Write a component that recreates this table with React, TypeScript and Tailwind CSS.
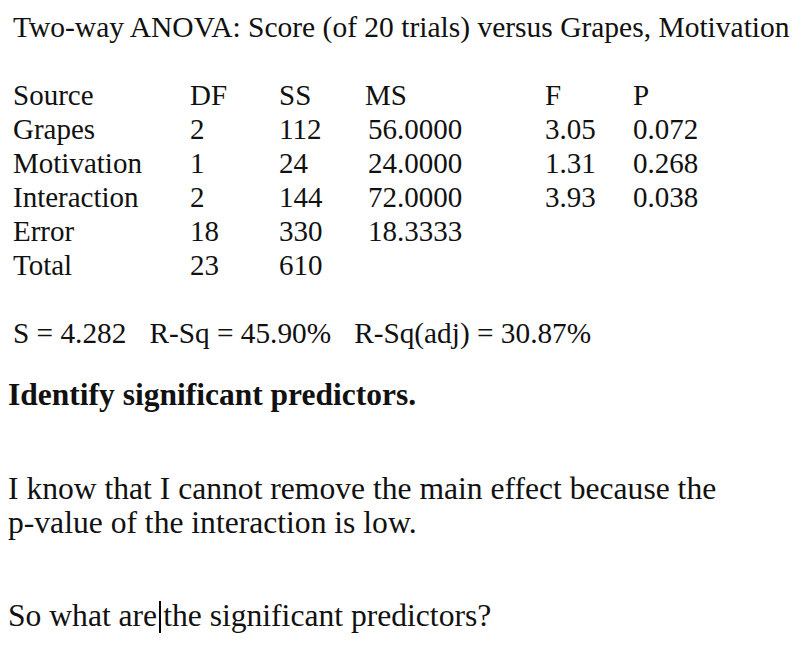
import React from "react";

const rows = [
  ["Source", "DF", "SS", "MS", "F", "P"],
  ["Grapes", "2", "112", "56.0000", "3.05", "0.072"],
  ["Motivation", "1", "24", "24.0000", "1.31", "0.268"],
  ["Interaction", "2", "144", "72.0000", "3.93", "0.038"],
  ["Error", "18", "330", "18.3333", "", ""],
  ["Total", "23", "610", "", "", ""],
];

export default function App() {
  return (
    <div className="w-[807px] h-[649px] bg-white text-[#111] overflow-hidden" style={{ fontFamily: '"Liberation Serif", serif' }}>
      <div className="pl-[13px] pt-[9px] text-[29.5px] leading-[36px] whitespace-nowrap">
        Two-way ANOVA: Score (of 20 trials) versus Grapes, Motivation
      </div>
      <div className="pl-[13px] pt-[33px] grid grid-cols-[177px_89px_86px_180px_88px_1fr] text-[29px] leading-[34px] whitespace-nowrap">
        {rows.map((r, i) =>
          r.map((c, j) => (
            <div key={i + "-" + j} className={j === 3 && i > 0 ? "pl-[3px]" : ""}>
              {c}
            </div>
          ))
        )}
      </div>
      <div className="pl-[13px] pt-[34px] text-[29.3px] leading-[34px] whitespace-nowrap flex gap-[23px]">
        <span>S = 4.282</span>
        <span>R-Sq = 45.90%</span>
        <span>R-Sq(adj) = 30.87%</span>
      </div>
      <div className="pl-[8px] pt-[27px] text-[31.5px] leading-[36px] font-bold whitespace-nowrap">
        Identify significant predictors.
      </div>
      <div className="pl-[8px] pt-[59px] text-[31.6px] leading-[34px] whitespace-nowrap">
        <div>I know that I cannot remove the main effect because the</div>
        <div>p-value of the interaction is low.</div>
      </div>
      <div className="pl-[8px] pt-[59px] text-[31.6px] leading-[34px] whitespace-nowrap">
        So what are<span className="inline-block w-[2px] h-[32px] bg-black align-[-7px] mx-[2px]"></span>the significant predictors?
      </div>
    </div>
  );
}
